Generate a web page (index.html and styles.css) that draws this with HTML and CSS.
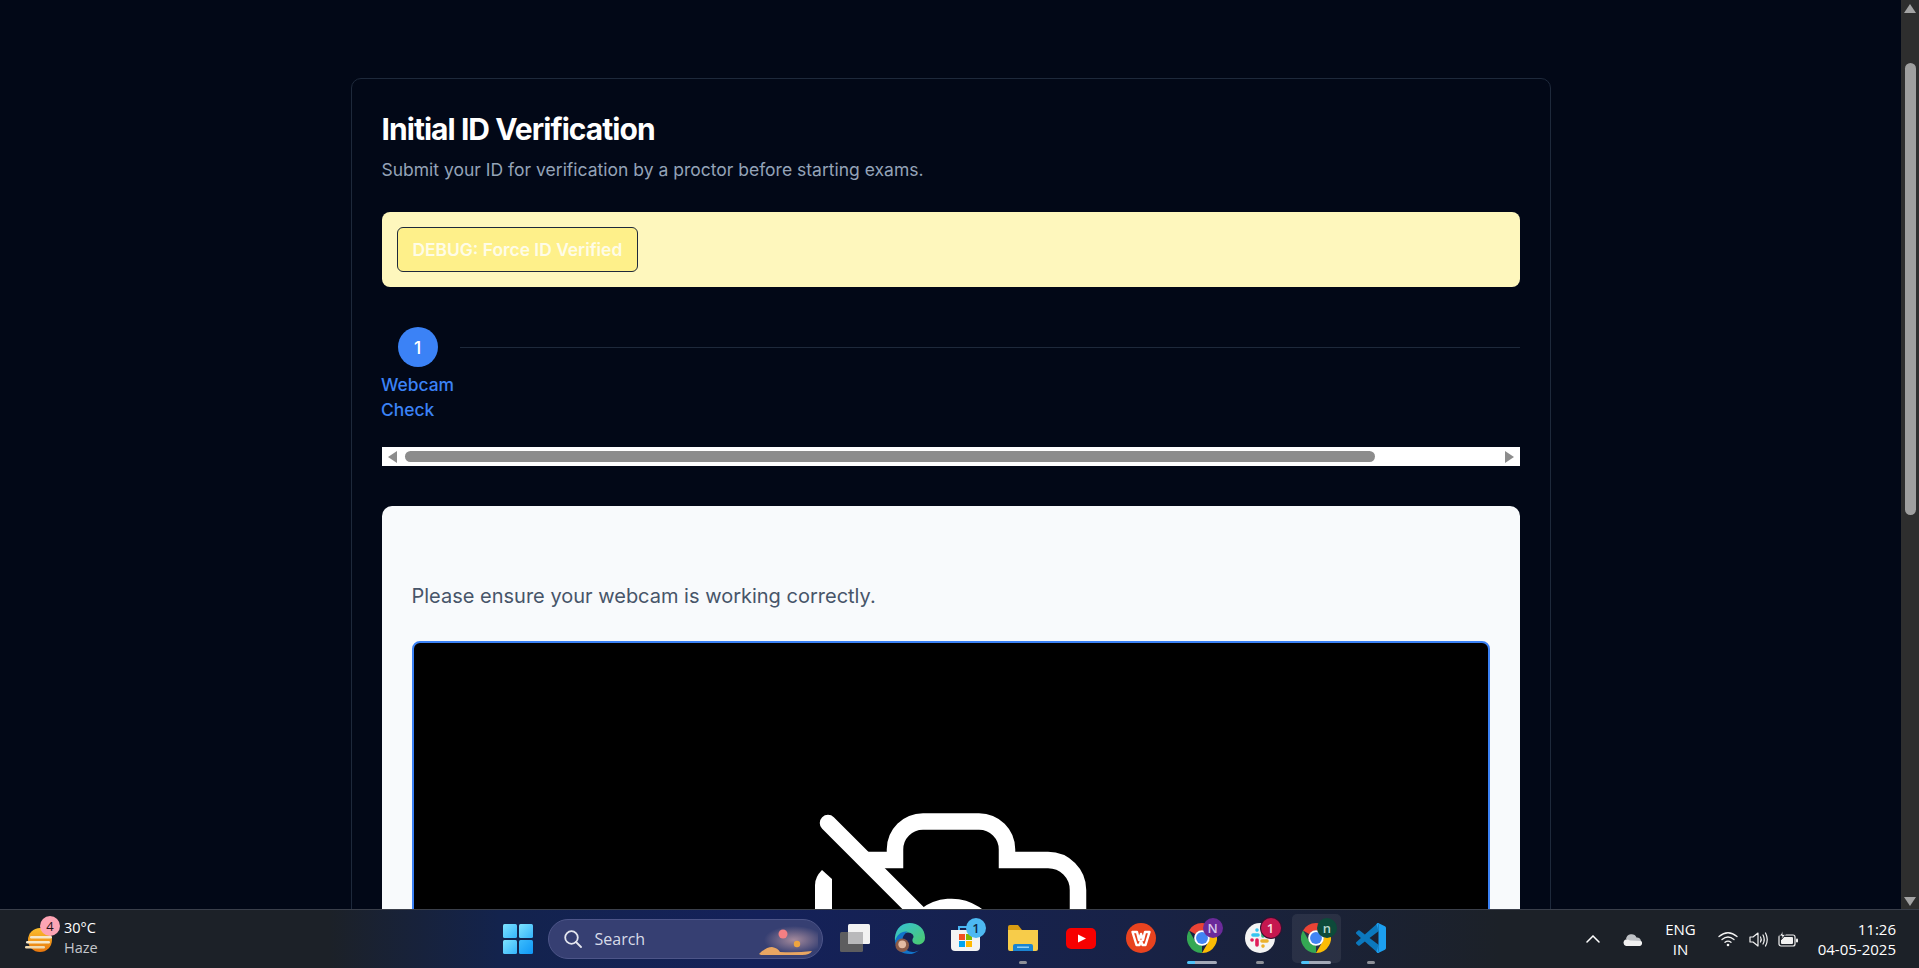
FILE: index.html
```html
<!DOCTYPE html>
<html lang="en">
  <head>
    <meta charset="UTF-8" />
    <meta name="viewport" content="width=device-width, initial-scale=1.0" />
    <title>Initial ID Verification</title>
    <link rel="stylesheet" href="styles.css">
  </head>
  <body>
    <svg class="defs" width="0" height="0" aria-hidden="true">
      <symbol id="chrome" viewBox="0 0 48 48">
        <path id="chrome-red" fill="#ea4335" d="M24 0A24 24 0 0 1 44.8 12H24A12 12 0 0 0 13.6 18L3.2 12A24 24 0 0 1 24 0Z" />
        <path fill="#fbbc04" d="M24 0A24 24 0 0 1 44.8 12H24A12 12 0 0 0 13.6 18L3.2 12A24 24 0 0 1 24 0Z" transform="rotate(120 24 24)" />
        <path fill="#34a853" d="M24 0A24 24 0 0 1 44.8 12H24A12 12 0 0 0 13.6 18L3.2 12A24 24 0 0 1 24 0Z" transform="rotate(240 24 24)" />
        <circle cx="24" cy="24" r="12.5" fill="#fff" />
        <circle cx="24" cy="24" r="9.5" fill="#4285f4" />
      </symbol>
    </svg>

    <div class="screen">
      <div class="browser">
        <main class="page">
          <section class="card">
            <h1 class="title">Initial ID Verification</h1>
            <p class="subtitle">Submit your ID for verification by a proctor before starting exams.</p>

            <div class="debug-bar">
              <button class="debug-btn">DEBUG: Force ID Verified</button>
            </div>

            <div class="stepper">
              <div class="step">
                <div class="step-num">1</div>
                <div class="step-label">Webcam Check</div>
              </div>
              <div class="step-line"></div>
            </div>

            <div class="hscroll">
              <span class="harrow harrow-left"></span>
              <span class="hthumb"></span>
              <span class="harrow harrow-right"></span>
            </div>

            <div class="panel">
              <p class="panel-text">Please ensure your webcam is working correctly.</p>
              <div class="video">
                <svg class="cam-off" viewBox="0 -1 300 300" width="300" height="300" fill="none" stroke="#fff" stroke-width="16.5">
                  <path d="M62 65H94V54.500a28 28 0 0 1 28-28H178a28 28 0 0 1 28 28V65H247a30 30 0 0 1 30 30V240" />
                  <path stroke-linecap="round" d="M27 28L274 275" />
                  <path d="M122 123A42 42 0 0 1 190 168" />
                  <path stroke="none" fill="#fff" d="M14 240V90Q14 82 21 75L31 84V240Z" />
                </svg>
              </div>
            </div>
          </section>
        </main>

        <div class="vscroll">
          <span class="varrow varrow-up"></span>
          <span class="vthumb"></span>
          <span class="vspace"></span>
          <span class="varrow varrow-down"></span>
        </div>
      </div>

      <footer class="taskbar">
        <div class="tb-weather">
          <div class="weather-icon">
            <svg viewBox="0 0 28 24" width="28" height="24">
              <defs>
                <linearGradient id="sun" x1="0" y1="0" x2="0" y2="1">
                  <stop offset="0" stop-color="#fbbf2e" />
                  <stop offset="1" stop-color="#e8760c" />
                </linearGradient>
              </defs>
              <circle cx="15" cy="12" r="12" fill="url(#sun)" />
              <rect x="5" y="8" width="22" height="2.500" rx="1.200" fill="#f6e7c9" />
              <rect x="1" y="13" width="24" height="2.500" rx="1.200" fill="#f6e7c9" />
              <rect x="0" y="18" width="20" height="2.500" rx="1.200" fill="#f0d9ae" />
            </svg>
            <span class="badge badge-pink">4</span>
          </div>
          <div class="weather-text">
            <div>30°C</div>
            <div class="haze">Haze</div>
          </div>
        </div>

        <div class="win-logo">
          <span></span><span></span><span></span><span></span>
        </div>

        <div class="search">
          <svg viewBox="0 0 18 18" width="18" height="18" fill="none" stroke="#e4e6ef" stroke-width="1.800">
            <circle cx="7.500" cy="7.500" r="6.300" />
            <path stroke-linecap="round" d="M12 12L17 17" />
          </svg>
          <span class="search-text">Search</span>
          <svg class="search-art" viewBox="0 -3 62 32" width="62" height="32">
            <defs>
              <radialGradient id="glow">
                <stop offset="0" stop-color="#a58a9c" />
                <stop offset="1" stop-color="#a58a9c" stop-opacity="0" />
              </radialGradient>
            </defs>
            <ellipse cx="38" cy="14" rx="30" ry="14" fill="url(#glow)" />
            <circle cx="27" cy="8" r="4.500" fill="#f47f83" />
            <circle cx="41" cy="18" r="3.200" fill="#efa43f" />
            <path fill="#e8a662" d="M3 28Q10 21 16 21Q22 22 24 26Q40 27 56 25Q54 29 46 29H5Z" />
          </svg>
        </div>

        <div class="tb-apps">
          <div class="tb-item">
            <svg viewBox="0 0 30 28" width="30" height="28">
              <rect x="0" y="8" width="23" height="20" rx="1.500" fill="#5d5d5f" />
              <rect x="8" y="0" width="22" height="20" rx="1.500" fill="#f2f2f2" />
              <rect x="8" y="8" width="15" height="12" fill="#b9b9bb" />
            </svg>
          </div>
          <div class="tb-item">
            <svg viewBox="0 0 32 32" width="31" height="31">
              <defs>
                <linearGradient id="edge-a" x1="0" y1="0" x2="1" y2="1">
                  <stop offset="0" stop-color="#35c1d8" />
                  <stop offset="1" stop-color="#4ccb6a" />
                </linearGradient>
              </defs>
              <path fill="url(#edge-a)" d="M16 0C25 0 32 6 32 15C32 21 27 23 23 22C19 21 18 18 20 15C21 13 18 9 13 10C7 11 3 16 1 19C0 9 6 0 16 0Z" />
              <path fill="#1173c9" d="M1 19C3 12 8 8 14 9C9 12 7 18 10 24C12 29 19 32 26 28C22 31 19 32 16 32C8 32 2 27 1 19Z" />
              <circle cx="8.500" cy="23" r="7" fill="#8a5a48" />
              <circle cx="8.500" cy="22" r="4" fill="#e2b9a2" />
            </svg>
          </div>
          <div class="tb-item">
            <svg viewBox="0 0 29 26" width="29" height="26">
              <path fill="#f3f3f3" d="M0 5H29V22A4 4 0 0 1 25 26H4A4 4 0 0 1 0 22Z" />
              <path fill="none" stroke="#49b5f2" stroke-width="2" d="M8 5V2H21V5" />
              <rect x="8" y="9" width="6" height="6" fill="#f25022" />
              <rect x="15" y="9" width="6" height="6" fill="#7fba00" />
              <rect x="8" y="16" width="6" height="6" fill="#00a4ef" />
              <rect x="15" y="16" width="6" height="6" fill="#ffb900" />
            </svg>
            <span class="badge badge-blue">1</span>
          </div>
          <div class="tb-item">
            <svg viewBox="0 0 30 26" width="30" height="26">
              <path fill="#d99c12" d="M0 2A2 2 0 0 1 2 0H10L14 5H0Z" />
              <path fill="#f7cc4a" d="M0 5H30V24A2 2 0 0 1 28 26H2A2 2 0 0 1 0 24Z" />
              <path fill="#1a84d2" d="M5 26V21A2 2 0 0 1 7 19H23A2 2 0 0 1 25 21V26Z" />
              <rect x="9" y="21.500" width="12" height="1.500" fill="#8fd0f5" />
            </svg>
            <span class="dot"></span>
          </div>
          <div class="tb-item">
            <svg viewBox="0 0 30 21" width="30" height="21">
              <rect width="30" height="21" rx="5" fill="#f70000" />
              <path fill="#fff" d="M12 6.500L20 10.500L12 14.500Z" />
            </svg>
          </div>
          <div class="tb-item">
            <svg viewBox="0 0 30 30" width="30" height="30">
              <circle cx="15" cy="15" r="15" fill="#e8431f" />
              <path fill="none" stroke="#fff" stroke-width="2.400" stroke-linejoin="round" d="M6.500 9H11L13 17L15 11L17 17L19 9H23.500L19.500 22H16.500L15 18L13.500 22H10.500Z" />
            </svg>
          </div>
          <div class="tb-item">
            <svg viewBox="0 0 30 30" width="30" height="30"><use href="#chrome" /></svg>
            <span class="badge badge-purple">N</span>
            <span class="progress"></span>
          </div>
          <div class="tb-item">
            <svg viewBox="0 0 30 30" width="30" height="30">
              <circle cx="15" cy="15" r="15" fill="#f4f4f4" />
              <g stroke-width="3.600" stroke-linecap="round" fill="none">
                <path stroke="#36c5f0" d="M8 12H13M12 7V7.100" />
                <path stroke="#2eb67d" d="M18 8V13M22 13H22.100" />
                <path stroke="#ecb22e" d="M17 18H22M18 23V23.100" />
                <path stroke="#e01e5a" d="M12 17V22M7 17H7.100" />
              </g>
            </svg>
            <span class="badge badge-red">1</span>
            <span class="dot"></span>
          </div>
          <div class="tb-item tb-active">
            <svg viewBox="0 0 30 30" width="30" height="30"><use href="#chrome" /></svg>
            <span class="badge badge-green">n</span>
            <span class="progress"></span>
          </div>
          <div class="tb-item">
            <svg viewBox="0 0 100 100" width="30" height="30">
              <path fill="#0b78bd" d="M71 2L29.500 38 12.400 25a4.200 4.200 0 0 0-5.300.2L1.600 30.200a4.200 4.200 0 0 0 0 6.200L16.400 50 1.600 63.600a4.200 4.200 0 0 0 0 6.200l5.500 5a4.200 4.200 0 0 0 5.300.2l17.100-13L71 98 75 72.700 45.200 50 75 27.300Z" />
              <path fill="#1c9ff0" d="M96.500 10.800 75.900.9A6.200 6.200 0 0 0 68.800 2.100L75 4V96L68.800 97.900A6.200 6.200 0 0 0 75.900 99.100L96.500 89.200A6.200 6.200 0 0 0 100 83.600V16.400A6.200 6.200 0 0 0 96.500 10.800Z" />
              <path fill="#1c9ff0" d="M75 0V100L68 97 75 72.700V27.300L68 3Z" />
            </svg>
            <span class="dot"></span>
          </div>
        </div>

        <div class="tray">
          <svg class="tray-chevron" viewBox="0 0 14 8" width="14" height="8" fill="none" stroke="#fff" stroke-width="1.500">
            <path stroke-linecap="round" d="M1 7L7 1L13 7" />
          </svg>
          <svg class="tray-cloud" viewBox="0 0 20 13" width="20" height="13">
            <path fill="#bfc2c6" d="M4 6A5.500 5.500 0 0 1 14.500 4.500A4 4 0 0 1 19 8H6Z" />
            <path fill="#f1f1f1" d="M4 13A3.500 3.500 0 0 1 3.500 6.500Q6 6 8 7.500L19 8A2.800 2.800 0 0 1 17 13Z" />
          </svg>
          <div class="tray-lang">
            <div>ENG</div>
            <div>IN</div>
          </div>
          <svg class="tray-wifi" viewBox="0 0 20 16" width="20" height="16" fill="none" stroke="#f2f2f2" stroke-width="1.300" stroke-linecap="round">
            <path d="M1 5.500Q10-2 19 5.500" />
            <path d="M4 8.500Q10 3.500 16 8.500" />
            <path d="M7 11.300Q10 8.800 13 11.300" />
            <circle cx="10" cy="14" r="1.300" fill="#f2f2f2" stroke="none" />
          </svg>
          <svg class="tray-sound" viewBox="0 0 20 17" width="20" height="17" fill="none" stroke="#f2f2f2" stroke-width="1.200" stroke-linecap="round">
            <path stroke-linejoin="round" d="M1 6V11H4L9 15V2L4 6Z" />
            <path d="M11.500 6Q13 8.500 11.500 11" />
            <path d="M14 4Q16.500 8.500 14 13" />
            <path d="M16.500 2Q20 8.500 16.500 15" />
          </svg>
          <svg class="tray-battery" viewBox="0 0 20 16" width="20" height="16">
            <rect x="1" y="4" width="16" height="11" rx="2" fill="none" stroke="#f2f2f2" stroke-width="1.200" />
            <path fill="#f2f2f2" d="M6 6H14A1 1 0 0 1 15 7V12A1 1 0 0 1 14 13H4A1 1 0 0 1 3 12V9Z" />
            <rect x="18" y="7.500" width="2" height="4" rx="1" fill="#f2f2f2" />
            <path fill="#f2f2f2" stroke="#1c2128" stroke-width=".8" d="M5 0L1.500 5H4L3.500 8.500L7.500 3.500H4.800Z" />
          </svg>
          <div class="tray-clock">
            <div>11:26</div>
            <div>04-05-2025</div>
          </div>
        </div>
      </footer>
    </div>
  </body>
</html>
```

FILE: styles.css
```css
* {
  box-sizing: border-box;
}

body {
  margin: 0;
  padding: 0;
  overflow: hidden;
  font-family: Inter, "Liberation Sans", sans-serif;
  background-color: #020817;
}

.defs {
  display: block;
  height: 0;
}

.screen {
  display: flex;
  flex-direction: column;
  height: 100vh;
}

.browser {
  display: flex;
  flex: 1;
  min-height: 0;
}

.page {
  flex: 1;
  overflow: hidden;
  padding-top: 78px;
  background-color: #020817;
}

.card {
  width: 1200px;
  margin: 0 auto;
  padding: 32px 30px 30px;
  border: 1px solid #1e293b;
  border-radius: 10px;
}

.title {
  margin: 0;
  font-size: 30px;
  line-height: 36px;
  font-weight: 700;
  letter-spacing: -0.95px;
  color: #fff;
}

.subtitle {
  margin: 9px 0 0;
  font-size: 17.5px;
  line-height: 28px;
  color: #94a3b8;
}

.debug-bar {
  margin-top: 28px;
  padding: 15px;
  background-color: #fef7bd;
  border-radius: 8px;
}

.debug-btn {
  display: block;
  height: 45px;
  padding: 0 15px;
  font-family: inherit;
  font-size: 17.4px;
  font-weight: 600;
  color: #fefce8;
  background-color: #fef08a;
  border: 1px solid #1e293b;
  border-radius: 6px;
}

.stepper {
  display: flex;
  margin-top: 40px;
  padding-bottom: 25px;
}

.step {
  display: flex;
  flex-direction: column;
  align-items: center;
  width: 72px;
}

.step-num {
  display: flex;
  align-items: center;
  justify-content: center;
  width: 40px;
  height: 40px;
  font-size: 17.4px;
  font-weight: 500;
  color: #fff;
  background-color: #3b82f6;
  border-radius: 50%;
}

.step-label {
  margin-top: 5px;
  font-size: 17.4px;
  line-height: 25px;
  font-weight: 500;
  color: #3b82f6;
}

.step-line {
  flex: 1;
  height: 1px;
  margin: 20px 0 0 6px;
  background-color: #1e293b;
}

.hscroll {
  display: flex;
  align-items: center;
  height: 19px;
  padding: 0 6px;
  background-color: #fff;
}

.hthumb {
  width: 970px;
  height: 11px;
  margin-left: 8px;
  background-color: #8c8c8c;
  border-radius: 6px;
}

.harrow {
  width: 0;
  height: 0;
  border-top: 6px solid transparent;
  border-bottom: 6px solid transparent;
}

.harrow-left {
  border-right: 9px solid #8c8c8c;
}

.harrow-right {
  margin-left: auto;
  border-left: 9px solid #8c8c8c;
}

.panel {
  margin-top: 40px;
  padding: 77px 30px 30px;
  background-color: #f8fafc;
  border-radius: 10px;
}

.panel-text {
  margin: 0 0 31px;
  font-size: 20px;
  line-height: 27px;
  color: #475569;
}

.video {
  display: flex;
  align-items: center;
  justify-content: center;
  aspect-ratio: 16 / 9;
  background-color: #000;
  border: 2px solid #3b82f6;
  border-radius: 8px;
}

.vscroll {
  display: flex;
  flex-direction: column;
  align-items: center;
  width: 18px;
  padding: 4px 0 3px;
  background-color: #2e2e2e;
}

.varrow {
  width: 0;
  height: 0;
  border-left: 6px solid transparent;
  border-right: 6px solid transparent;
}

.varrow-up {
  border-bottom: 9px solid #a3a3a3;
}

.varrow-down {
  border-top: 9px solid #a3a3a3;
}

.vthumb {
  width: 11px;
  height: 452px;
  margin-top: 50px;
  background-color: #9f9f9f;
  border-radius: 6px;
}

.vspace {
  flex: 1;
}

/* 任务栏 */
.taskbar {
  position: relative;
  display: flex;
  align-items: center;
  flex-shrink: 0;
  height: 59px;
  padding-left: 25px;
  font-family: "Open Sans", "Noto Sans", sans-serif;
  font-size: 15px;
  color: #fff;
  background: linear-gradient(90deg, #1c2128 0, #1c2128 330px, #13234d 500px, #14215a 760px, #182245 1150px, #1c2128 1500px, #1c2128 100%);
  border-top: 1px solid #3a3f4a;
}

.tb-weather {
  display: flex;
  align-items: center;
  width: 478px;
}

.weather-icon {
  position: relative;
  width: 28px;
  height: 24px;
  margin-top: 2px;
}

.weather-icon .badge {
  top: -12px;
  left: 14px;
}

.weather-text {
  margin: -2px 0 0 11px;
  font-size: 14.5px;
  line-height: 20px;
}

.haze {
  color: #c4c7cc;
}

.win-logo {
  display: grid;
  grid-template-columns: 14px 14px;
  grid-template-rows: 14px 14px;
  gap: 1.500px;
}

.win-logo span {
  border-radius: 1.500px;
  background: linear-gradient(135deg, #7de3ff, #35b4fb);
}

.win-logo span:nth-child(4) {
  background: linear-gradient(135deg, #3cbcfc, #0f97f6);
}

.search {
  display: flex;
  align-items: center;
  width: 275px;
  height: 40px;
  margin-left: 15px;
  padding: 0 4px 0 15px;
  background-color: #363f72;
  border: 1px solid #4d5588;
  border-radius: 20px;
}

.search-text {
  margin-left: 13px;
  font-size: 16px;
  color: #d8dbe8;
}

.search-art {
  margin-left: auto;
}

.tb-apps {
  display: grid;
  grid-template-columns: 56px 54px 57px 59px 56px 64px 58px 58px 55px 54px;
  height: 100%;
  margin-left: 4px;
}

.tb-item {
  position: relative;
  display: flex;
  align-items: center;
  justify-content: center;
  padding-bottom: 2px;
}

.tb-active::before {
  content: "";
  position: absolute;
  top: 4px;
  left: 3px;
  width: 49px;
  height: 49px;
  background-color: rgba(255, 255, 255, 0.07);
  border-radius: 5px;
}

.tb-item svg {
  position: relative;
}

.badge {
  position: absolute;
  top: 8px;
  left: 50%;
  display: flex;
  align-items: center;
  justify-content: center;
  width: 20px;
  height: 20px;
  margin-left: 1px;
  font-size: 13px;
  font-weight: 600;
  border-radius: 50%;
}

.badge-pink {
  color: #26141a;
  font-weight: 400;
  background-color: #fda4b4;
}

.badge-blue {
  color: #0f2b4a;
  background-color: #4db9f2;
}

.badge-purple {
  color: #d9c6ec;
  background-color: #6b2a9a;
}

.badge-red {
  color: #fde3ea;
  background-color: #c5174f;
  box-shadow: 0 0 0 1px #3a1030;
}

.badge-green {
  color: #b8d8ce;
  background-color: #0d4a3a;
}

.dot {
  position: absolute;
  left: 50%;
  bottom: 4px;
  width: 8px;
  height: 3px;
  margin-left: -4px;
  background-color: #8d9098;
  border-radius: 2px;
}

.progress {
  position: absolute;
  left: 50%;
  bottom: 4px;
  width: 30px;
  height: 3px;
  margin-left: -15px;
  background: linear-gradient(90deg, #4fc3f7 0, #4fc3f7 8px, #a3a9b8 8px);
  border-radius: 2px;
}

.tray {
  display: flex;
  align-items: center;
  flex: 1;
  margin-left: 188px;
}

.tray-cloud {
  margin-left: 22px;
}

.tray-lang {
  width: 40px;
  margin-left: 19px;
  line-height: 20px;
  text-align: center;
}

.tray-wifi {
  margin-left: 17px;
}

.tray-sound {
  margin-left: 11px;
}

.tray-battery {
  margin-left: 9px;
}

.tray-clock {
  margin-left: auto;
  margin-right: 23px;
  line-height: 20px;
  text-align: right;
}
```
